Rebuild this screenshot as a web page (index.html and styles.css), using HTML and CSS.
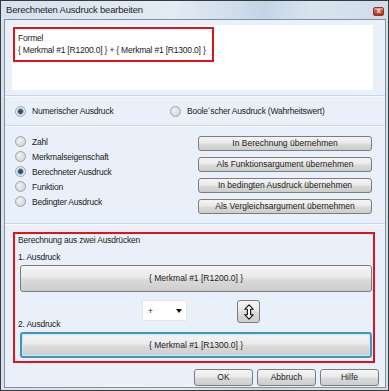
FILE: index.html
```html
<!DOCTYPE html>
<html lang="de">
<head>
  <meta charset="UTF-8"/>
  <title>Berechneten Ausdruck bearbeiten</title>
  <link rel="stylesheet" href="styles.css">
</head>
<body>
  <div class="window">
    <div class="titlebar">
      <span class="title">Berechneten Ausdruck bearbeiten</span>
      <span class="close">x</span>
    </div>
    <div class="client">
      <div class="formula-box">
        <div>Formel</div>
        <div>{ Merkmal #1 [R1200.0] } + { Merkmal #1 [R1300.0] }</div>
        <div class="mark-formula"></div>
      </div>
      <div class="sep"></div>
      <div class="type-row">
        <label class="opt"><span class="radio checked"></span>Numerischer Ausdruck</label>
        <label class="opt"><span class="radio"></span>Boole´scher Ausdruck (Wahrheitswert)</label>
      </div>
      <div class="sep"></div>
      <div class="kinds">
        <div class="kind-list">
          <label class="opt"><span class="radio"></span>Zahl</label>
          <label class="opt"><span class="radio"></span>Merkmalseigenschaft</label>
          <label class="opt"><span class="radio checked"></span>Berechneter Ausdruck</label>
          <label class="opt"><span class="radio"></span>Funktion</label>
          <label class="opt"><span class="radio"></span>Bedingter Ausdruck</label>
        </div>
        <div class="actions">
          <button class="btn">In Berechnung übernehmen</button>
          <button class="btn">Als Funktionsargument übernehmen</button>
          <button class="btn">In bedingten Ausdruck übernehmen</button>
          <button class="btn">Als Vergleichsargument übernehmen</button>
        </div>
      </div>
      <div class="sep"></div>
      <div class="calc">
        <div class="calc-title">Berechnung aus zwei Ausdrücken</div>
        <div class="calc-label">1. Ausdruck</div>
        <button class="btn big-btn">{ Merkmal #1 [R1200.0] }</button>
        <div class="swap-row">
          <div class="calc-label second">2. Ausdruck</div>
          <div class="select"><span>+</span><span class="arrow"></span></div>
          <div></div>
          <button class="btn swap">
            <svg width="10" height="16" viewBox="0 0 10 16">
              <path d="M5 0.8 L9.3 5.3 L6.6 5.3 L6.6 10.7 L9.3 10.7 L5 15.2 L0.7 10.7 L3.4 10.7 L3.4 5.3 L0.7 5.3 Z" fill="#fff" stroke="#111" stroke-width="1.1" stroke-linejoin="round"/>
            </svg>
          </button>
        </div>
        <button class="btn big-btn focus">{ Merkmal #1 [R1300.0] }</button>
      </div>
      <div class="footer">
        <button class="btn">OK</button>
        <button class="btn">Abbruch</button>
        <button class="btn">Hilfe</button>
      </div>
    </div>
  </div>
</body>
</html>
```

FILE: styles.css
```css
* { box-sizing: border-box; }
body { margin: 0; background: #fff; font-family: "Liberation Sans", Arial, sans-serif; font-size: 8.5px; letter-spacing: -0.2px; color: #1b1b1b; }

.window { width: 389px; height: 391px; border: 1px solid #3a3a3a; padding: 0 2px 2px 3px; display: flex; flex-direction: column;
  background: linear-gradient(to right, #d6e2ef 0%, #e3ebf4 45%, #c5d5e7 68%, #d8e3f0 80%, #d0dcea 100%); }
.titlebar { height: 18px; display: flex; justify-content: space-between; align-items: flex-start; padding-left: 2px; }
.title { font-size: 9.5px; line-height: 18px; letter-spacing: -0.2px; color: #1e1e1e; }
.close { width: 11px; height: 9px; margin: 6px 2px 0 0; border: 1px solid #8a3a2a; border-radius: 2px; color: #fff; font-size: 7px; line-height: 6px; text-align: center; font-weight: bold;
  background: linear-gradient(#eaa590, #c94a30 50%, #b5341e); }

.client { flex: 1; border: 1px solid #848f9c; background: #e9f0f9; display: flex; flex-direction: column; }

.formula-box { position: relative; margin: 5px 12px 5px 7px; height: 65px; background: #fff; padding: 7px 0 0 6px; line-height: 12px; }
.mark-formula { position: absolute; left: 1px; top: 2px; width: 201px; height: 35px; border: 2px solid #e0121c; }

.sep { height: 2px; border-top: 1px solid #c6d6ea; border-bottom: 1px solid #f8fbff; }

.opt { display: flex; align-items: center; gap: 6px; height: 15px; }
.radio { width: 11px; height: 11px; border-radius: 50%; border: 1px solid #a0a4a8; flex: none;
  background: radial-gradient(circle at 40% 40%, #f2f3f4, #c9ccd0); }
.radio.checked { background: radial-gradient(circle, #1d3b59 0, #3d5f80 2px, #9fb3c7 3px, #e4e9ef 3.6px, #f4f6f8 100%); }

.type-row { height: 28px; display: grid; grid-template-columns: 155px 1fr; align-items: center; padding-left: 10px; }

.kinds { height: 96px; display: flex; justify-content: space-between; padding: 0 13px 0 10px; }
.kind-list { padding-top: 7px; }
.actions { padding-top: 9px; width: 174px; display: flex; flex-direction: column; gap: 6px; }

.btn { font: inherit; color: #1b1b1b; height: 15px; padding: 0; border: 1px solid #7c7c7c; border-radius: 3px; line-height: 13px; text-align: center;
  background: linear-gradient(#f4f4f4, #eaeaea 45%, #dadada 55%, #cdcdcd); }

.calc { margin: 7px 10px 0 8px; height: 131px; border: 2px solid #e0121c; padding: 0 1px 3px 3px; display: flex; flex-direction: column; }
.calc-title { line-height: 12px; }
.calc-label { line-height: 12px; margin-top: 5px; }
.calc-label.second { margin-top: 0; align-self: end; }
.big-btn { height: 27px; margin: 2px 0 0 2px; line-height: 25px; }
.big-btn.focus { height: 26px; margin-top: 2px; border: 2px solid #3f97be; box-shadow: inset 0 0 0 1px #c6e9f6; line-height: 22px; }

.swap-row { height: 38px; display: grid; grid-template-columns: 124px 45px 50px 23px; align-items: start; }
.select { margin-top: 8px; height: 21px; background: #fff; border: 1px solid #e3e7eb; display: flex; justify-content: space-between; align-items: center; padding: 0 4px 0 5px; }
.arrow { width: 0; height: 0; border-left: 3px solid transparent; border-right: 3px solid transparent; border-top: 4px solid #111; }
.swap { margin-top: 8px; width: 23px; height: 23px; display: flex; align-items: center; justify-content: center; }

.footer { margin-top: 6px; display: flex; justify-content: flex-end; gap: 4px; padding-right: 6px; }
.footer .btn { width: 59px; height: 17px; line-height: 15px; }
```
